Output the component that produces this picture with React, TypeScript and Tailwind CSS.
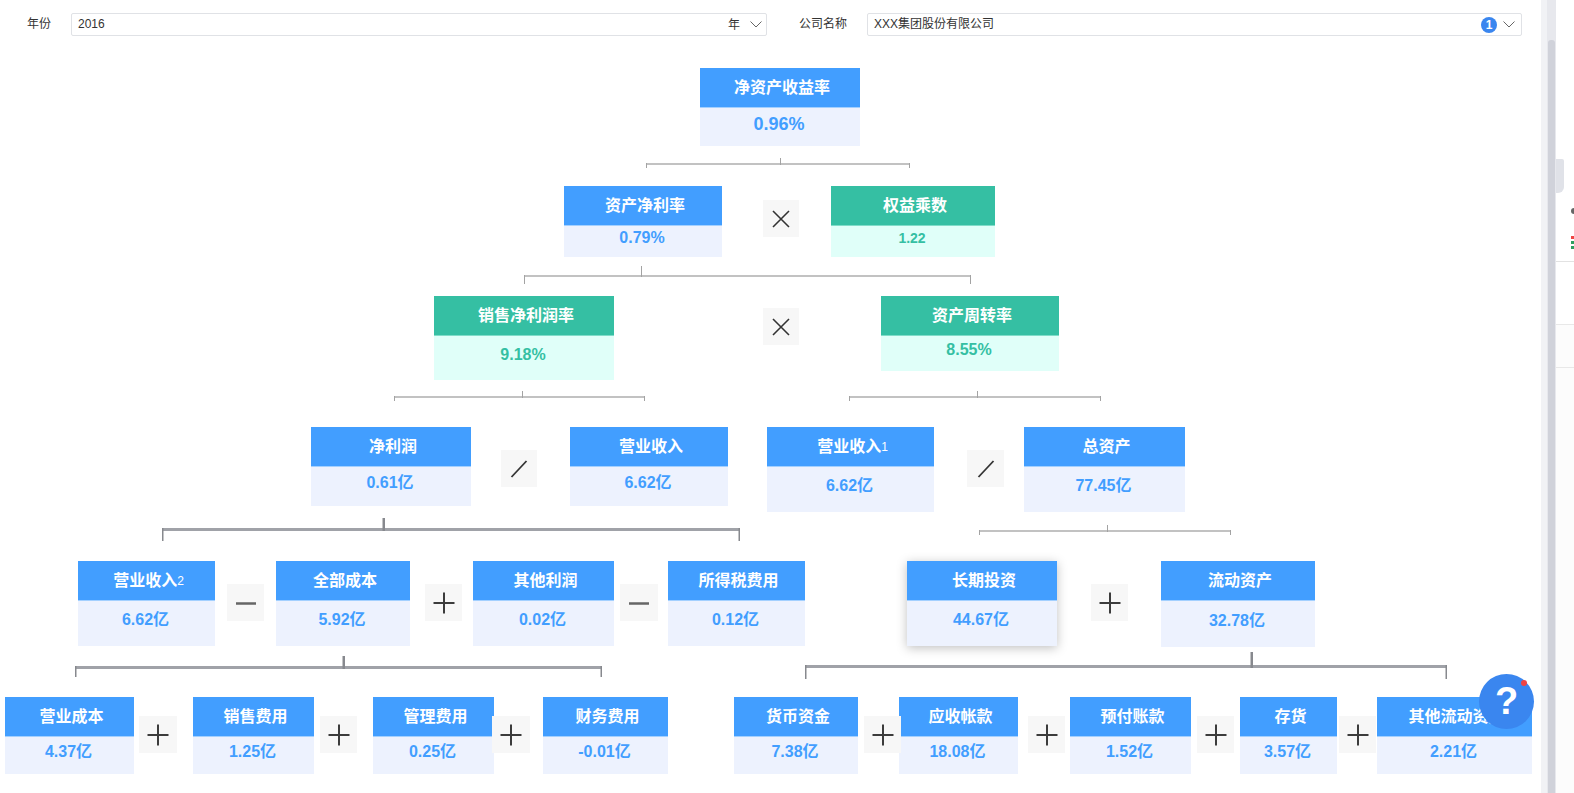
import React from "react";

type Tone = "blue" | "green";
type OpKind = "times" | "plus" | "minus" | "divide";

function Node({
  title,
  sub,
  value,
  className,
  body,
  tone = "blue",
  valueSize = "text-base",
}: {
  title: string;
  sub?: string;
  value: string;
  className: string;
  body: string;
  tone?: Tone;
  valueSize?: string;
}) {
  const green = tone === "green";
  return (
    <div className={`shrink-0 ${className}`}>
      <div
        className={`flex h-[40px] items-center justify-center border-b pl-[4px] pt-[1px] text-base font-bold text-white ${
          green ? "border-[#7fdcc8] bg-[#35bfa3]" : "border-[#a3d0ff] bg-[#429eff]"
        }`}
      >
        {title}
        {sub && <span className="text-xs font-normal">{sub}</span>}
      </div>
      <div
        className={`flex items-center justify-center pr-[2px] pb-[7px] font-bold ${valueSize} ${body} ${
          green ? "bg-[#e0fff9] text-[#35bfa3]" : "bg-[#edf2fe] text-[#429eff]"
        }`}
      >
        {value}
      </div>
    </div>
  );
}

function Op({ kind, className }: { kind: OpKind; className: string }) {
  return (
    <div className={`relative z-10 flex h-[37px] shrink-0 items-center justify-center bg-[#f7f7f7] ${className}`}>
      <svg width="24" height="24" viewBox="0 0 24 24" fill="none" strokeLinecap="butt">
        {kind === "times" && <path d="M4 4L20 20M20 4L4 20" stroke="#333" strokeWidth="1.6" />}
        {kind === "plus" && <path d="M1.5 12H22.5M12 1.5V22.5" stroke="#3c3c3c" strokeWidth="2" />}
        {kind === "minus" && <path d="M2 12.5H22" stroke="#666" strokeWidth="2.5" />}
        {kind === "divide" && <path d="M19.5 4L4.5 20" stroke="#333" strokeWidth="1.8" />}
      </svg>
    </div>
  );
}

// connector between two levels of the tree
function Bracket({
  w,
  h,
  bar,
  stem,
  heavy,
  className = "",
}: {
  w: number;
  h: number;
  bar: number;
  stem: number;
  heavy?: boolean;
  className?: string;
}) {
  const barH = heavy ? 3 : 2;
  const line = heavy ? 1.5 : 1;
  const color = heavy ? "#87898e" : "#a3a3a3";
  return (
    <svg width={w} height={h} className={`block shrink-0 ${className}`}>
      <rect x="0" y={bar} width={w} height={barH} fill={heavy ? "#a0a2a8" : "#c2c2c2"} />
      <rect x="0" y={bar} width={line} height={h - bar} fill={color} />
      <rect x={w - line} y={bar} width={line} height={h - bar} fill={color} />
      <rect x={stem} y="0" width={heavy ? 2.5 : 1} height={bar + barH} fill={color} />
    </svg>
  );
}

function Chevron({ className = "" }: { className?: string }) {
  return (
    <svg width="12" height="7" viewBox="0 0 12 7" fill="none" className={className}>
      <path d="M0.5 0.5L6 6L11.5 0.5" stroke="#666" strokeWidth="1" />
    </svg>
  );
}

export default function App() {
  return (
    <div className="flex h-[793px] w-[1574px] overflow-hidden bg-white font-['Liberation_Sans','Noto_Sans_CJK_SC',sans-serif] text-[#333]">
      <main className="relative w-[1541px] shrink-0">
        {/* Filters */}
        <div className="mt-[13px] flex h-[23px] items-center text-xs">
          <span className="ml-[27px] w-[24px] shrink-0 pb-[2px]">年份</span>
          <div className="ml-[20px] flex h-[23px] w-[696px] shrink-0 items-center rounded-[2px] border border-[#e0e2e6] pl-[6px] pr-[4px]">
            <span className="flex-1 pb-[1px]">2016</span>
            <span>年</span>
            <Chevron className="ml-[10px]" />
          </div>
          <span className="ml-[32px] w-[48px] shrink-0 pb-[2px]">公司名称</span>
          <div className="ml-[20px] flex h-[23px] w-[655px] shrink-0 items-center rounded-[2px] border border-[#e0e2e6] pl-[6px] pr-[6px]">
            <span className="flex-1 pb-[1px]">XXX集团股份有限公司</span>
            <span className="flex h-4 w-4 items-center justify-center rounded-full bg-[#3a86ef] text-xs font-bold text-white">1</span>
            <Chevron className="ml-[6px]" />
          </div>
        </div>

        {/* Level 0 */}
        <div className="mt-[32px] flex items-start">
          <Node title="净资产收益率" value="0.96%" className="ml-[700px] w-[160px]" body="h-[38px]" valueSize="text-lg" />
        </div>
        <div className="mt-[12px] flex">
          <Bracket w={264} h={10} bar={5} stem={134} className="ml-[646px]" />
        </div>

        {/* Level 1 */}
        <div className="mt-[18px] flex items-start">
          <Node title="资产净利率" value="0.79%" className="ml-[564px] w-[158px]" body="h-[31px]" />
          <Op kind="times" className="ml-[41px] mt-[14px] w-[36px]" />
          <Node title="权益乘数" value="1.22" tone="green" className="ml-[32px] w-[164px]" body="h-[31px]" valueSize="text-sm" />
        </div>
        <div className="mt-[9px] flex">
          <Bracket w={447} h={18} bar={9} stem={117} className="ml-[524px]" />
        </div>

        {/* Level 2 */}
        <div className="mt-[12px] flex items-start">
          <Node title="销售净利润率" value="9.18%" tone="green" className="ml-[434px] w-[180px]" body="h-[44px]" />
          <Op kind="times" className="ml-[149px] mt-[12px] w-[36px]" />
          <Node title="资产周转率" value="8.55%" tone="green" className="ml-[82px] w-[178px]" body="h-[35px]" />
        </div>
        <div className="mt-[11px] flex">
          <Bracket w={251} h={10} bar={5} stem={128} className="ml-[394px]" />
          <Bracket w={252} h={10} bar={5} stem={128} className="ml-[204px]" />
        </div>

        {/* Level 3 */}
        <div className="mt-[26px] flex items-start">
          <Node title="净利润" value="0.61亿" className="ml-[311px] w-[160px]" body="h-[39px]" />
          <Op kind="divide" className="ml-[30px] mt-[23px] w-[36px]" />
          <Node title="营业收入" value="6.62亿" className="ml-[33px] w-[158px]" body="h-[39px]" />
          <Node title="营业收入" sub="1" value="6.62亿" className="ml-[39px] w-[167px]" body="h-[45px]" />
          <Op kind="divide" className="ml-[33px] mt-[23px] w-[37px]" />
          <Node title="总资产" value="77.45亿" className="ml-[20px] w-[161px]" body="h-[45px]" />
        </div>
        <div className="mt-[6px] flex items-start">
          <Bracket w={578} h={23} bar={10} stem={220.5} heavy className="ml-[162px]" />
          <Bracket w={252} h={10} bar={5} stem={128} className="ml-[239px] mt-[7px]" />
        </div>

        {/* Level 4 */}
        <div className="mt-[20px] flex items-start">
          <Node title="营业收入" sub="2" value="6.62亿" className="ml-[78px] w-[137px]" body="h-[45px]" />
          <Op kind="minus" className="ml-[12px] mt-[23px] w-[37px]" />
          <Node title="全部成本" value="5.92亿" className="ml-[12px] w-[134px]" body="h-[45px]" />
          <Op kind="plus" className="ml-[15px] mt-[23px] w-[37px]" />
          <Node title="其他利润" value="0.02亿" className="ml-[11px] w-[141px]" body="h-[45px]" />
          <Op kind="minus" className="ml-[6px] mt-[23px] w-[38px]" />
          <Node title="所得税费用" value="0.12亿" className="ml-[10px] w-[137px]" body="h-[45px]" />
          <Node title="长期投资" value="44.67亿" className="ml-[102px] w-[150px] shadow-[0_2px_10px_rgba(0,0,0,0.25)]" body="h-[45px]" />
          <Op kind="plus" className="ml-[34px] mt-[23px] w-[37px]" />
          <Node title="流动资产" value="32.78亿" className="ml-[33px] w-[154px]" body="h-[46px]" />
        </div>
        <div className="mt-[5px] flex items-start">
          <Bracket w={527} h={21} bar={10} stem={267.5} heavy className="ml-[75px] mt-[4px]" />
          <Bracket w={642} h={27} bar={13} stem={445.5} heavy className="ml-[203px]" />
        </div>

        {/* Level 5 */}
        <div className="mt-[18px] flex items-start">
          <Node title="营业成本" value="4.37亿" className="ml-[5px] w-[129px]" body="h-[37px]" />
          <Op kind="plus" className="ml-[5px] mt-[19px] w-[38px]" />
          <Node title="销售费用" value="1.25亿" className="ml-[16px] w-[121px]" body="h-[37px]" />
          <Op kind="plus" className="ml-[6px] mt-[19px] w-[37px]" />
          <Node title="管理费用" value="0.25亿" className="ml-[16px] w-[121px]" body="h-[37px]" />
          <Op kind="plus" className="-ml-[2px] mt-[19px] w-[38px]" />
          <Node title="财务费用" value="-0.01亿" className="ml-[13px] w-[125px]" body="h-[37px]" />
          <Node title="货币资金" value="7.38亿" className="ml-[66px] w-[124px]" body="h-[37px]" />
          <Op kind="plus" className="ml-[6px] mt-[19px] w-[37px]" />
          <Node title="应收帐款" value="18.08亿" className="-ml-[2px] w-[119px]" body="h-[37px]" />
          <Op kind="plus" className="ml-[10px] mt-[19px] w-[37px]" />
          <Node title="预付账款" value="1.52亿" className="ml-[5px] w-[121px]" body="h-[37px]" />
          <Op kind="plus" className="ml-[6px] mt-[19px] w-[37px]" />
          <Node title="存货" value="3.57亿" className="ml-[6px] w-[97px]" body="h-[37px]" />
          <Op kind="plus" className="ml-[2px] mt-[19px] w-[37px]" />
          <Node title="其他流动资产" value="2.21亿" className="ml-[1px] w-[155px]" body="h-[37px]" />
        </div>

        {/* Help button */}
        <div className="absolute left-[1479px] top-[674px] z-20 flex h-[55px] w-[55px] items-center justify-center rounded-full bg-[#3a86ef] text-[38px] font-bold text-white">
          ?
          <span className="absolute right-[7px] top-[6px] h-[6px] w-[6px] rounded-full bg-[#ef4444]" />
        </div>
      </main>

      {/* Scrollbar */}
      <div className="w-[6px] shrink-0 bg-[#f1f2f5]" />
      <div className="w-[9px] shrink-0 bg-[#e7e8ed] pt-[40px]">
        <div className="mx-[1px] h-full rounded-t-[3px] bg-[#d0d2da]" />
      </div>

      {/* Next panel, cut off by the window */}
      <div className="flex w-[18px] shrink-0 flex-col">
        <div className="mt-[159px] h-[34px] w-[8px] rounded-br-[6px] rounded-tr-[2px] bg-[#e0e2e8]" />
        <div className="ml-[15px] mt-[15px] h-[6px] w-[3px] rounded-l-full bg-[#666]" />
        <div className="ml-[15px] mt-[22px] h-[3px] w-[3px] bg-[#ef4444]" />
        <div className="ml-[15px] mt-[2px] h-[3px] w-[3px] bg-[#2f9e5f]" />
        <div className="ml-[15px] mt-[2px] h-[3px] w-[3px] bg-[#2f9e5f]" />
        <div className="mt-[12px] h-[63px] border-t border-[#e2e2e2]" />
        <div className="h-[43px] border-t border-[#e8e8e8] bg-[#fcfcfc]" />
        <div className="flex-1 border-t border-[#e8e8e8] bg-[#fcfcfc]" />
      </div>
    </div>
  );
}
